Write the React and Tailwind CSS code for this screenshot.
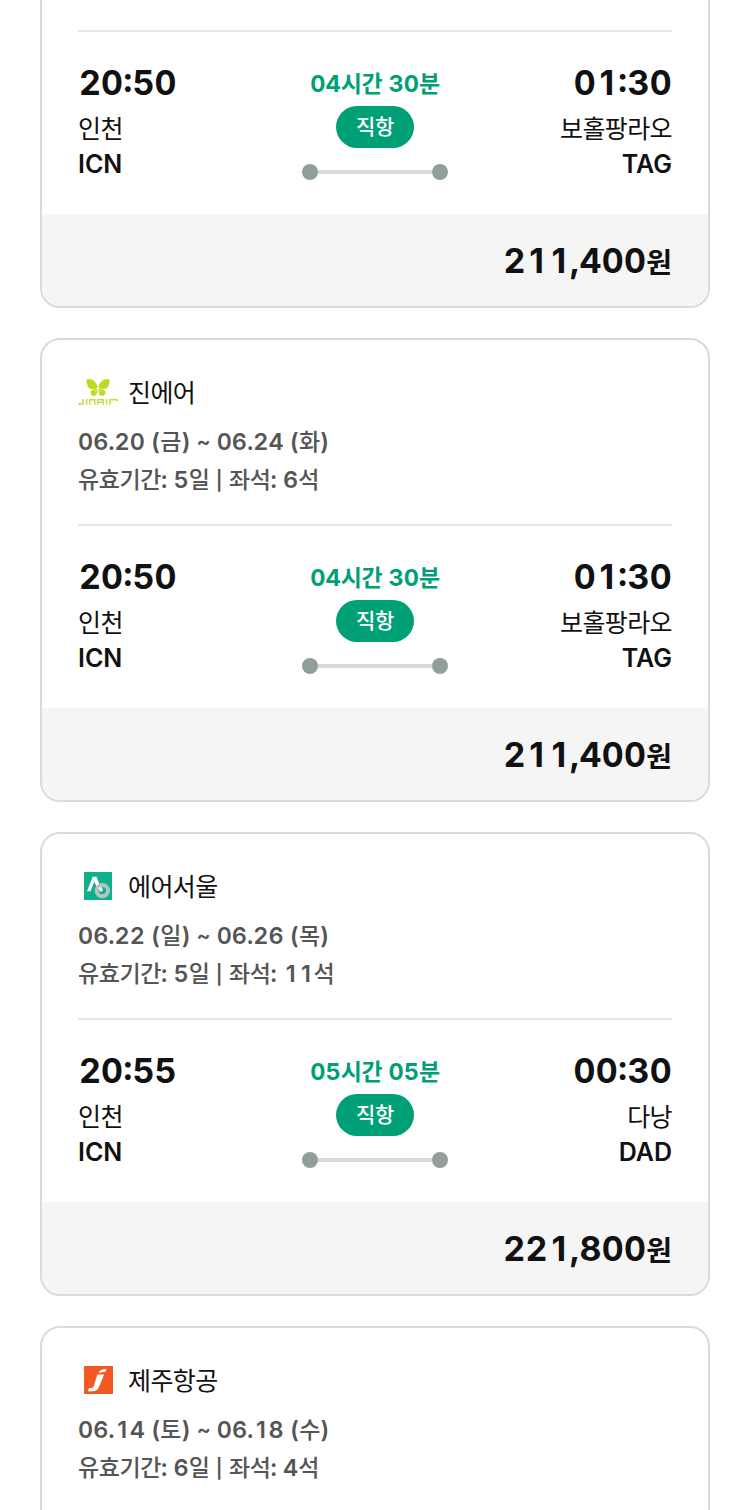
import React from "react";

const RUNS = /([\uAC00-\uD7A3]+|\||1|~|\d:)/;

function Mixed({ text, ko = "" }) {
  return text.split(RUNS).map((run, i) => {
    if (run === "1") {
      return (
        <span key={i} className="inline-block w-[0.65em] text-center proportional-nums">
          1
        </span>
      );
    }
    if (run === "|") {
      return (
        <span key={i} className="relative -top-px text-[19px]">
          |
        </span>
      );
    }
    if (run === "~") {
      return (
        <span key={i} className="relative -top-px text-[21px]">
          ~
        </span>
      );
    }
    return i % 2 ? (
      <span key={i} className={ko}>
        {run}
      </span>
    ) : (
      <React.Fragment key={i}>{run}</React.Fragment>
    );
  });
}

/* The colon is lifted to the middle of the figures. */
function Clock({ time }) {
  const [h, m] = time.split(":");
  return (
    <>
      <Mixed text={h} />
      <span className="relative -top-[3px]">:</span>
      <Mixed text={m} />
    </>
  );
}

function JinAirLogo() {
  return (
    <svg width="40" height="28" viewBox="0 0 40 28" className="block">
      <g fill="#b9dc1f">
        <path d="M19.600 9.400C19.300 5.200 15.600.9 10.400.9c-1.700 0-2.200.8-2 2.300.2 1.600.7 2.700 1 4.100.5 2.500 2.100 4 5.200 3.800 1.900-.1 3.700-.7 5-1.700z" />
        <path d="M20.400 9.400C20.700 5.200 24.400.9 29.600.9c1.700 0 2.200.8 2 2.300-.2 1.600-.7 2.700-1 4.100-.5 2.500-2.100 4-5.200 3.800-1.900-.1-3.700-.7-5-1.700z" />
        <path d="M19.400 11c-2.500-.1-5.500.6-6.500 2.100-.8 1.200-.4 2.800.7 3.800 1.300 1.200 3.400 1.300 4.500.1 1.200-1.300 1.500-3.500 1.300-6z" />
        <path d="M20.600 11c2.500-.1 5.500.6 6.500 2.100.8 1.200.4 2.800-.7 3.800-1.300 1.200-3.400 1.300-4.500.1-1.200-1.300-1.500-3.500-1.300-6z" />
      </g>
      <path d="M16.500 14.200l2.200-2.400M23.500 14.200l-2.200-2.400" stroke="#fff" strokeWidth="0.6" />
      <path
        d="M0 26h5v-5M8.700 21v5.700M11.800 26.700v-5h5v5M19.800 26.700v-5h5.400v5M19.800 24.400h5.400M28.600 21v5.700M32 26.700v-5h7.300v1.500"
        fill="none"
        stroke="#c0de35"
        strokeWidth="1.400"
      />
    </svg>
  );
}

function AirSeoulLogo() {
  return (
    <svg width="40" height="28" viewBox="0 0 40 28" className="block">
      <rect x="6" width="28" height="28" fill="#0fb08d" />
      <path d="M9 19.300L14.700 4.800h3.800L24 18.500l-3.500.5-4.100-9.200L12.600 19.300z" fill="#fff" />
      <circle cx="24.300" cy="18.600" r="5.700" fill="#0fb08d" stroke="#b5c4bf" strokeWidth="4" />
      <path d="M20.600 15.500l1.200 4 3-.2-.8-4z" fill="#fff" />
    </svg>
  );
}

function JejuAirLogo() {
  return (
    <svg width="40" height="28" viewBox="0 0 40 28" className="block">
      <rect x="6" width="29" height="28" fill="#f15a22" />
      <path d="M21.300 5.500c1.800-1.900 4-2.500 7.200-2.500l-1.400 3.100c-2.300 0-3.900.2-5.800 1z" fill="#fff" />
      <path d="M19.300 8.600h6.800l-5 12.100c-1.400 3.400-3.600 4.500-6.600 4.500H9.800l1.400-3.300h2.200c1.300 0 1.900-.4 2.400-1.600z" fill="#fff" />
    </svg>
  );
}

const flights = [
  { dep: "20:50", arr: "01:30", to: "보홀팡라오", code: "TAG", dur: "04시간 30분", price: "211,400" },
  { Logo: JinAirLogo, airline: "진에어", dates: "06.20 (금) ~ 06.24 (화)", info: "유효기간: 5일 | 좌석: 6석", dep: "20:50", arr: "01:30", to: "보홀팡라오", code: "TAG", dur: "04시간 30분", price: "211,400" },
  { Logo: AirSeoulLogo, airline: "에어서울", dates: "06.22 (일) ~ 06.26 (목)", info: "유효기간: 5일 | 좌석: 11석", dep: "20:55", arr: "00:30", to: "다낭", code: "DAD", dur: "05시간 05분", price: "221,800" },
  { Logo: JejuAirLogo, airline: "제주항공", dates: "06.14 (토) ~ 06.18 (수)", info: "유효기간: 6일 | 좌석: 4석" },
];

function Place({ time, city, code, end }) {
  return (
    <div className={end ? "w-[200px] text-right" : "w-[200px]"}>
      <div className={`h-[48px] text-[34px] leading-[50px] font-bold tabular-nums ${end ? "tracking-[0.3px]" : "pl-px tracking-[0.1px]"}`}>
        <Clock time={time} />
      </div>
      <div className="mt-[6px] h-[35px] text-[25px] leading-[35px] tracking-[-0.6px]">{city}</div>
      <div className="h-[35px] text-[25px] leading-[35px] font-semibold">{code}</div>
    </div>
  );
}

function Summary({ f }) {
  const { Logo } = f;
  return (
    <div className="pt-8">
      <div className="flex h-10 items-center gap-[10px]">
        <Logo />
        <span className="pt-0.5 text-[25px] leading-10 tracking-[-0.6px]">{f.airline}</span>
      </div>
      <div className="mt-[11px] text-[23.4px] leading-[38px] font-semibold tabular-nums text-[#555]">
        <p className="h-[38px]">
          <Mixed text={f.dates} ko="text-[23px] font-medium" />
        </p>
        <p className="h-[38px]">
          <Mixed text={f.info} ko="text-[23px] font-medium tracking-[-0.4px]" />
        </p>
      </div>
    </div>
  );
}

function Route({ f }) {
  return (
    <div className="flex justify-between pt-[26px]">
      <Place time={f.dep} city="인천" code="ICN" />
      <div className="flex w-[150px] flex-col items-center">
        <div className="mt-2 h-[36px] text-[23.5px] leading-[36px] font-bold tabular-nums whitespace-nowrap text-[#00a077]">
          <Mixed text={f.dur} ko="text-[23px] tracking-[-0.4px]" />
        </div>
        <div className="mt-1 flex h-[42px] w-[78px] items-center justify-center rounded-full bg-[#00a077] pb-px text-[21px] leading-[40px] font-medium tracking-[-0.4px] text-white">
          직항
        </div>
        <div className="mt-4 flex w-[146px] items-center">
          <i className="size-4 rounded-full bg-[#919f99]" />
          <i className="h-1 grow bg-[#d5dbd8]" />
          <i className="size-4 rounded-full bg-[#919f99]" />
        </div>
      </div>
      <Place time={f.arr} city={f.to} code={f.code} end />
    </div>
  );
}

function FlightCard({ f }) {
  return (
    <article className="flex h-[464px] shrink-0 flex-col overflow-hidden rounded-[20px] border-2 border-[#d9dbdb] bg-white">
      <div className="flex grow flex-col px-9">
        <header className="h-[186px] border-b-2 border-[#e6e6e6]">{f.airline && <Summary f={f} />}</header>
        {f.dep && <Route f={f} />}
      </div>
      {f.price && (
        <footer className="h-[92px] shrink-0 bg-[#f5f5f5] px-9 text-right text-[34px] leading-[93px] font-bold tracking-[0.3px] tabular-nums">
          <Mixed text={f.price} />
          <span className="text-[28px] tracking-normal">원</span>
        </footer>
      )}
    </article>
  );
}

export default function App() {
  return (
    <main className="h-[1510px] overflow-hidden bg-white px-10 font-['Inter','Noto_Sans_CJK_KR',sans-serif] text-[#111]">
      <div className="-mt-[156px] flex flex-col gap-[30px]">
        {flights.map((f, i) => (
          <FlightCard key={i} f={f} />
        ))}
      </div>
    </main>
  );
}
